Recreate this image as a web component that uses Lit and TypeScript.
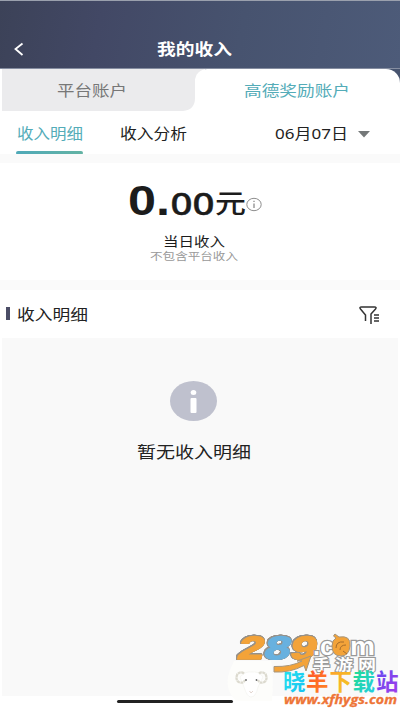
import { LitElement, html, css, svg } from "lit";
import { customElement, property } from "lit/decorators.js";

/** A line of text set in a wide face: the glyphs are fitted to `width`. */
@customElement("wide-text")
class WideText extends LitElement {
  @property() text = "";
  @property({ type: Number }) width = 60;
  @property({ type: Number }) size = 15;
  static styles = css`
    :host { display: block; flex: none; }
    svg { display: block; overflow: visible; }
    text { fill: currentColor; font-family: "Noto Sans", "Noto Sans CJK SC", sans-serif; }
  `;
  render() {
    const h = Math.round(this.size * 1.2);
    return html`<svg width=${this.width} height=${h}>
      <text x="0" y=${this.size - 0.7} font-size=${this.size} textLength=${this.width} lengthAdjust="spacingAndGlyphs">${this.text}</text>
    </svg>`;
  }
}

@customElement("site-marks")
class SiteMarks extends LitElement {
  static styles = css`
    :host { display: block; }
    svg { display: block; overflow: visible; }
    .num { font: 700 32px "Liberation Sans", sans-serif; stroke-width: 1.6px; stroke-linejoin: round; }
    .nums { filter: drop-shadow(.8px 0 0 #96918a) drop-shadow(-.8px 0 0 #96918a) drop-shadow(0 .7px 0 #96918a) drop-shadow(0 -.7px 0 #96918a); }
    .orange { fill: #f3a339; stroke: #f3a339; }
    .blue { fill: #68b1df; stroke: #68b1df; }
    .com { font: 700 25px "Liberation Sans", sans-serif; fill: #fff; stroke: #999; stroke-width: 2.4px; paint-order: stroke; }
    .sub { font: 700 15px "Noto Sans CJK SC", sans-serif; fill: #fff; stroke: #999; stroke-width: 2px; paint-order: stroke; }
    .name { font: 700 22.5px "Noto Sans CJK SC", sans-serif; }
    .url { font: italic 700 13px "Open Sans", sans-serif; fill: #ee7537; stroke: #ee7537; stroke-width: .3px; }
  `;
  render() {
    const chars: [string, number, string][] = [
      ["晓", 54, "url(#g1)"], ["羊", 77, "url(#g2)"], ["下", 100.5, "url(#g3)"], ["载", 123.5, "url(#g4)"], ["站", 147, "url(#g5)"],
    ];
    const grads = [["#25e8ed", "#18bff2"], ["#ff4b2b", "#ff8a24"], ["#ff9d2d", "#f0cc22"], ["#20df83", "#24cbe5"], ["#5a4df2", "#a43ce9"]];
    return html`<svg width="172" height="81" viewBox="0 0 172 81">
      <defs>${grads.map(([a, b], i) => svg`<linearGradient id=${"g" + (i + 1)} x2="1" y2="1"><stop stop-color=${a}/><stop offset="1" stop-color=${b}/></linearGradient>`)}</defs>
      <g class="nums">
        <text class="num orange" transform="translate(7.500 29) skewX(-13) scale(1.440 1)">2</text>
        <text class="num orange" transform="translate(60 29) skewX(-13) scale(1.440 1)">9</text>
        <text class="num blue" transform="translate(34 29) skewX(-13) scale(1.440 1)">8</text>
      </g>
      <text class="com" x="84" y="25" textLength="21" lengthAdjust="spacingAndGlyphs">.c</text>
      <text class="com" x="121" y="25" textLength="25" lengthAdjust="spacingAndGlyphs">m</text>
      <path d="M107 8Q103 6 106 4L110 7Q122 5 121 16Q120 26 112 26Q103 26 103 16Q103 10 107 8Z" fill="#f3a339" stroke="#a6957c"/>
      <path d="M107 18Q107 11 115 12M111 20Q111 15 117 15M114 21L118 24" fill="none" stroke="#a66d2b"/>
      <text class="sub" x="84" y="39.500" textLength="17" lengthAdjust="spacingAndGlyphs">手</text>
      <text class="sub" x="106" y="39.500" textLength="18" lengthAdjust="spacingAndGlyphs">游</text>
      <text class="sub" x="129" y="39.500" textLength="18" lengthAdjust="spacingAndGlyphs">网</text>
      <path d="M45 36.500Q62 37 73 31L68 31L82 26L77 41L75 35.500Q61 43 45 42Z" fill="#f3a339" stroke="#a6957c"/>
      <path d="M5 31H42Q45 45 43 71H7Q-6 58 1 40Z" fill="#fdfdfb"/>
      <path d="M11 47Q17 41 22 42Q30 41 34 47L29 57Q27 67 22 67Q18 67 15 57Z" fill="#fff" stroke="#f1f1ed" stroke-width=".6"/>
      <path d="M15 43.500Q12 41 8.500 44Q6 49 9.500 52Q14 54 16 50M30 43.500Q33 41 36.500 44Q39 49 35.500 52Q31 54 29 50" fill="none" stroke="#dcdacf" stroke-width="2.300" stroke-dasharray="3 .5"/>
      <circle cx="17" cy="50" r=".9" fill="#666"/><circle cx="27.500" cy="50" r=".9" fill="#666"/>
      <path d="M20.500 61L22 63L24 61" fill="none" stroke="#e3d6cf"/>
      ${chars.map(([c, x, f]) => svg`<text class="name" x=${x} y="59.500" fill=${f}>${c}</text>`)}
      <text class="url" x="55" y="73.500" textLength="113" lengthAdjust="spacingAndGlyphs">www.xfhygs.com</text>
    </svg>`;
  }
}

@customElement("app-root")
class AppRoot extends LitElement {
  static styles = css`
    * { box-sizing: border-box; }
    :host { display: flex; flex-direction: column; width: 400px; height: 711px; position: relative; overflow: hidden; background: #fff; color: #222; }
    svg { display: block; flex: none; }
    header { height: 69px; padding: 40px 0 0 13px; display: flex; background: linear-gradient(100deg, #3c4258, #424865 25%, #47536f 60%, #4d5b79); border-top: 1px solid #9aa0ad; border-bottom: 1px solid #858da0; color: #fff; }
    .title { margin: -1px 0 0 132px; font-weight: 700; }
    .tabs { height: 42px; display: flex; padding-left: 2px; background: linear-gradient(90deg, #fff 50%, #47546f 50%); }
    .idle { width: 203px; margin-right: -10px; padding: 13px 0 0 55px; background: #ebebed; color: #777; }
    .current { position: relative; flex: 1; border-radius: 12px 14px 0 0; background: #fff; color: #54acb8; padding: 13px 0 0 49px; }
    .foot { position: absolute; left: -12px; bottom: 0; }
    .views { height: 43px; display: flex; padding: 14px 30px 0 16px; }
    .view { width: 67px; height: 30px; padding-left: 1px; display: flex; flex-direction: column; justify-content: space-between; }
    .view.on { color: #54acb8; margin-right: 36px; }
    .line { height: 4px; border-radius: 2px; background: linear-gradient(90deg, #4fa9b8, #63b3a4); margin: 0 0 0 -1px; }
    .date { margin-left: auto; display: flex; gap: 10px; }
    .date svg { margin-top: 6px; }
    .gap { height: 9px; background: #fafafa; flex: none; }
    .gap.tall { height: 10px; }
    .total { height: 117px; padding-right: 12px; display: flex; flex-direction: column; align-items: center; color: #1c1c1c; }
    .amount { margin: 12px 0 0 4px; }
    .big { font: 700 43px "Liberation Sans", sans-serif; }
    .cents { font: 500 31px "Noto Sans", sans-serif; stroke: #1c1c1c; stroke-width: .4px; }
    .yuan { font: 500 26px "Noto Sans CJK SC", sans-serif; }
    .day { margin-top: 3px; }
    .note { color: #999; margin-top: 0; }
    .section { height: 48px; display: flex; padding: 16px 20px 0 6px; }
    .bar { width: 4px; height: 13px; margin: 1px 7px 0 0; background: #4b4d66; }
    .section svg { margin-left: auto; }
    .empty { height: 358px; margin: 0 2px; padding: 43px 13px 0 0; display: flex; flex-direction: column; align-items: center; background: #f9f9f9; }
    .empty wide-text { margin-top: 22px; }
    .home { width: 116px; height: 3px; margin: 4px 0 0 117px; border-radius: 2px; background: #222; }
    site-marks { position: absolute; left: 229px; top: 630px; }
  `;
  render() {
    return html`
      <header>
        <svg width="12" height="16"><path d="M9.500 2.500L2.500 8L9.500 14" fill="none" stroke="#fff" stroke-width="1.800"/></svg>
        <wide-text class="title" text="我的收入" .width=${75} .size=${15.5}></wide-text>
      </header>
      <div class="tabs">
        <div class="idle"><wide-text text="平台账户" .width=${70} .size=${15}></wide-text></div>
        <div class="current">
          <svg class="foot" width="13" height="42"><path d="M13 42H0Q12 41 12 29V10H13Z" fill="#fff"/></svg>
          <wide-text text="高德奖励账户" .width=${106} .size=${15}></wide-text>
        </div>
      </div>
      <div class="views">
        <div class="view on"><wide-text text="收入明细" .width=${66} .size=${14.5}></wide-text><div class="line"></div></div>
        <div class="view"><wide-text text="收入分析" .width=${67} .size=${14.5}></wide-text></div>
        <div class="date"><wide-text text="06月07日" .width=${73} .size=${14.5}></wide-text>
          <svg width="12" height="7"><path d="M0 0H12L6 6.500Z" fill="#747879"/></svg></div>
      </div>
      <div class="gap"></div>
      <div class="total">
        <svg class="amount" width="136" height="56" viewBox="128 175 136 56" fill="#1c1c1c">
          <text class="big" x="128" y="214.500" textLength="42" lengthAdjust="spacingAndGlyphs">0.</text>
          <text class="cents" x="170.500" y="214.500" textLength="44" lengthAdjust="spacingAndGlyphs">00</text>
          <text class="yuan" x="215" y="212.500" textLength="31" lengthAdjust="spacingAndGlyphs">元</text>
          <ellipse cx="254" cy="204.500" rx="7.200" ry="6.200" fill="none" stroke="#8d8d8d"/>
          <path d="M254 203.500V208M254 200.800V202" stroke="#8d8d8d" stroke-width="1.300"/>
        </svg>
        <wide-text class="day" text="当日收入" .width=${62} .size=${13}></wide-text>
        <wide-text class="note" text="不包含平台收入" .width=${88} .size=${10.5}></wide-text>
      </div>
      <div class="gap tall"></div>
      <div class="section">
        <div class="bar"></div>
        <wide-text text="收入明细" .width=${71} .size=${14.5}></wide-text>
        <svg width="21" height="19" fill="none" stroke="#333" stroke-width="1.500"><path d="M6.500 15V9L1.500 3Q0 1 2.500 1H15.500Q18 1 16.500 3L12 8V18M15 9H20M15 12H20M15 15H20"/></svg>
      </div>
      <div class="empty">
        <svg width="47" height="40"><ellipse cx="23.500" cy="20" rx="23.500" ry="20" fill="#bfc1ce"/><ellipse cx="23.500" cy="11.500" rx="2.800" ry="2.500" fill="#fff"/><rect x="20.500" y="17" width="6" height="15" rx="1" fill="#fff"/></svg>
        <wide-text text="暂无收入明细" .width=${114} .size=${16}></wide-text>
      </div>
      <div class="home"></div>
      <site-marks></site-marks>`;
  }
}
